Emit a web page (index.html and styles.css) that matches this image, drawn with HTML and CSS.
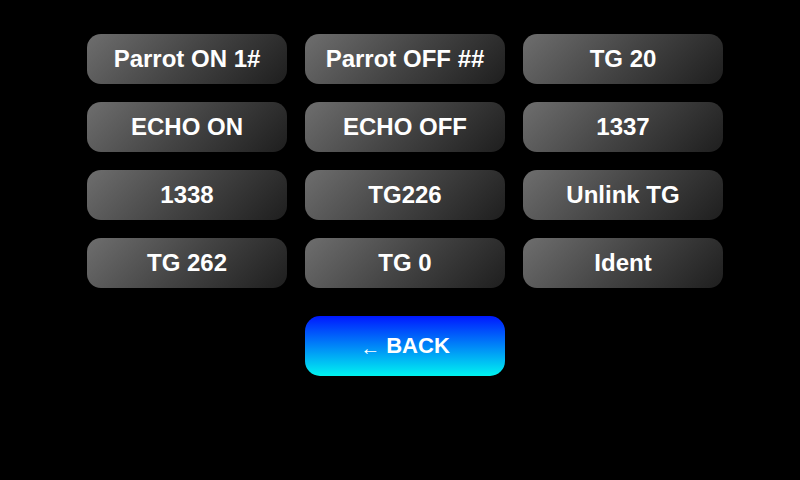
FILE: index.html
```html
<!DOCTYPE html>
<html>
<head>
<meta charset="utf-8">
<link rel="stylesheet" href="styles.css">
</head>
<body>
<div class="page">
  <div class="grid">
    <div class="btn">Parrot ON 1#</div>
    <div class="btn">Parrot OFF ##</div>
    <div class="btn">TG 20</div>
    <div class="btn">ECHO ON</div>
    <div class="btn">ECHO OFF</div>
    <div class="btn">1337</div>
    <div class="btn">1338</div>
    <div class="btn">TG226</div>
    <div class="btn">Unlink TG</div>
    <div class="btn">TG 262</div>
    <div class="btn">TG 0</div>
    <div class="btn">Ident</div>
  </div>
  <div class="back"><span class="arrow">←</span> BACK</div>
</div>
</body>
</html>
```
FILE: styles.css
```css
html, body {
  margin: 0;
  padding: 0;
  background: #000;
  width: 800px;
  height: 480px;
  overflow: hidden;
}
.page {
  padding-top: 34px;
  padding-left: 10px;
  display: flex;
  flex-direction: column;
  align-items: center;
  font-family: "Liberation Sans", Arial, sans-serif;
}
.grid {
  display: grid;
  grid-template-columns: repeat(3, 200px);
  gap: 18px;
}
.btn {
  height: 50px;
  border-radius: 14px;
  background: linear-gradient(135deg, #6e6e6e 0%, #444 50%, #1e1e1e 100%);
  color: #fff;
  font-weight: bold;
  font-size: 24px;
  display: flex;
  align-items: center;
  justify-content: center;
}
.back {
  margin-top: 28px;
  width: 200px;
  height: 60px;
  border-radius: 15px;
  background: linear-gradient(180deg, #0018ff 0%, #00f4f0 100%);
  color: #fff;
  font-weight: bold;
  font-size: 22px;
  display: flex;
  align-items: center;
  justify-content: center;
}
.arrow {
  font-weight: normal;
  font-size: 20px;
  margin-right: 6px;
  position: relative;
  top: 2px;
}
```
